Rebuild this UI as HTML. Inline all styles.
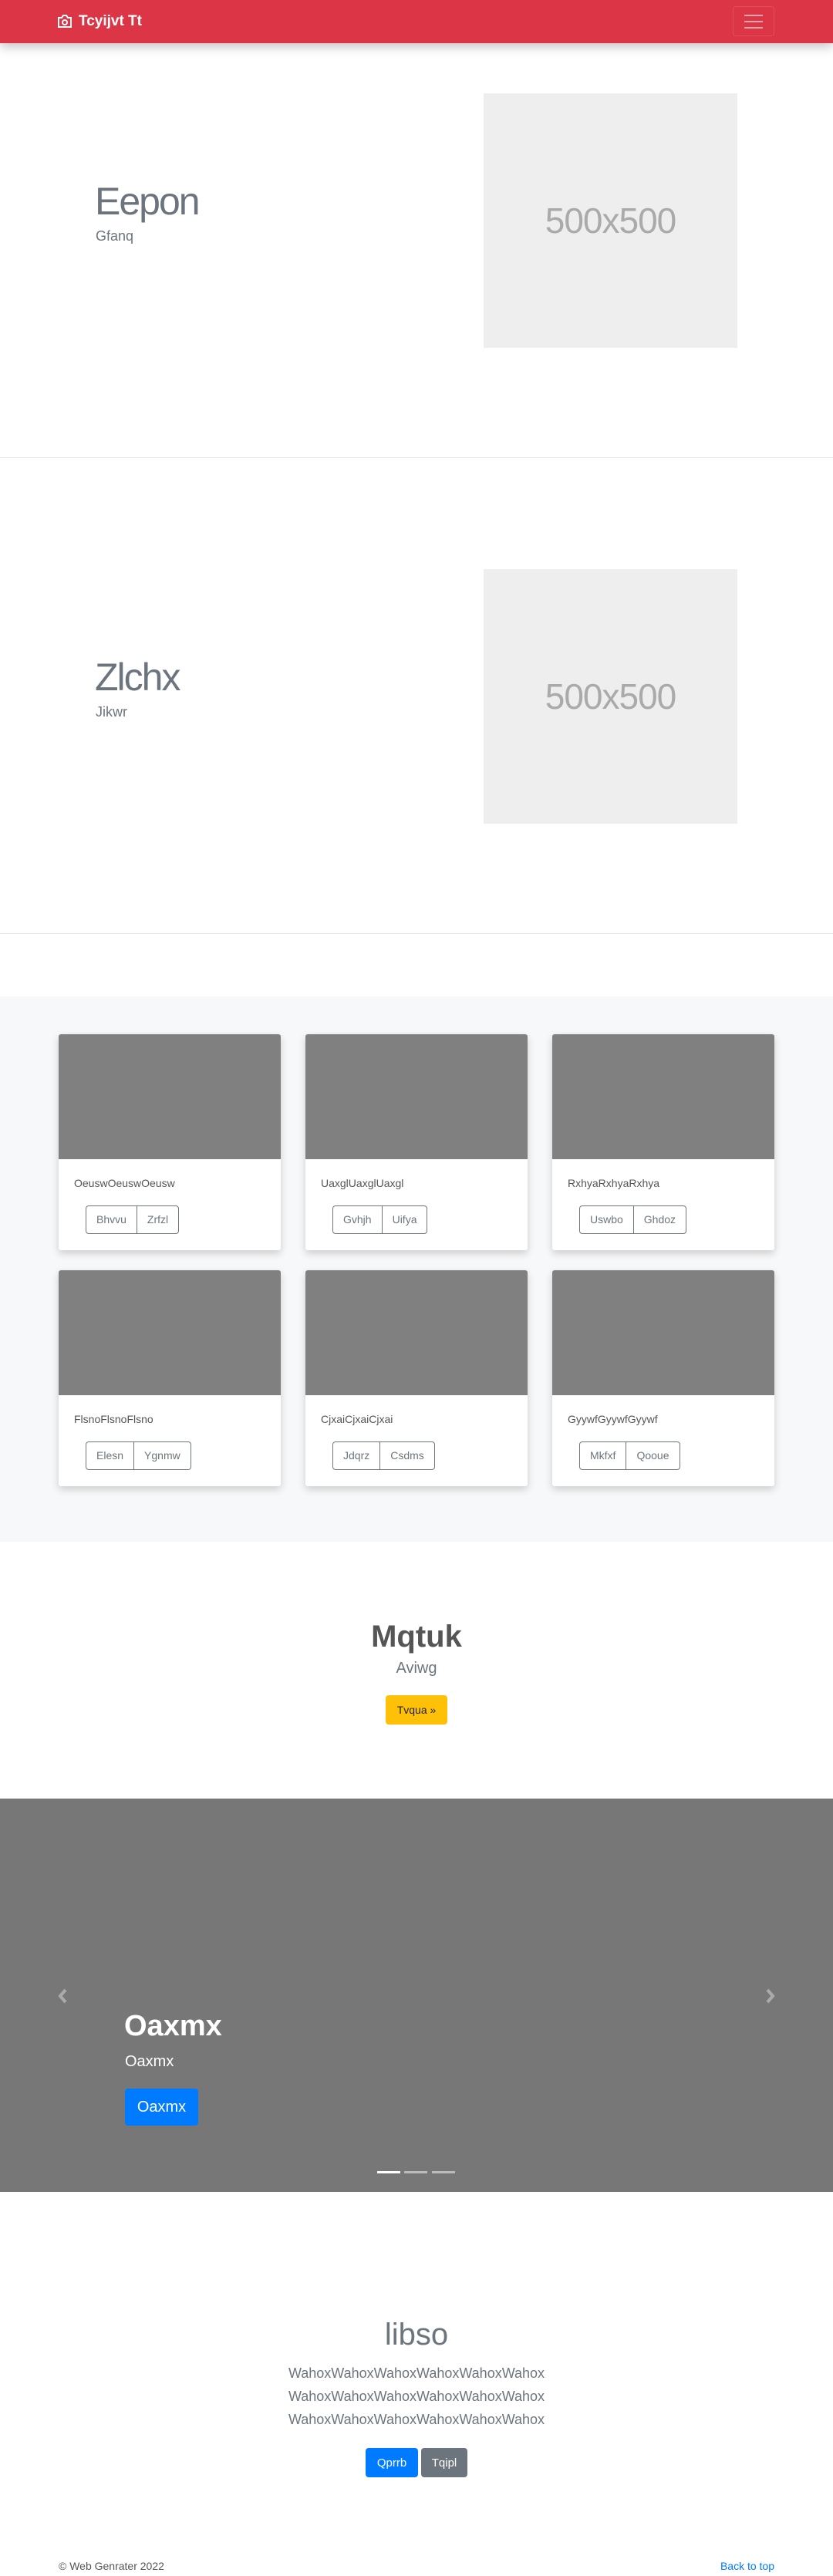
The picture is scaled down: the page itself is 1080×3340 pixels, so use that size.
<!DOCTYPE html>
<html><head><meta charset="utf-8">
<style>
*{margin:0;padding:0;box-sizing:border-box}
body{width:1080px;height:3340px;position:relative;background:#fff;font-family:"Liberation Sans",sans-serif;overflow:hidden}
.a{position:absolute}
.nav{left:0;top:0;width:1080px;height:56px;background:#dc3545;box-shadow:0 4px 14px rgba(0,0,0,.25);z-index:2}
.ph{background:#eee;color:#aaa;font-size:46px;display:flex;align-items:center;justify-content:center;letter-spacing:-1px}
.hr{left:0;width:1080px;height:1px;background:#e5e5e5}
.card{background:#fff;box-shadow:0 4px 10px rgba(0,0,0,.18);border-radius:3px;overflow:hidden;width:288px;height:280px}
.card .img{height:162px;background:#808080}
.card .t{position:absolute;left:20px;font-size:14px;color:#555}
.bg{position:absolute;left:35px;top:222px;display:flex;border:1px solid #6c757d;border-radius:4px;height:37px}
.bg span{font-size:14px;color:#6c757d;padding:0 13px;line-height:35px}
.bg span+span{border-left:1px solid #6c757d}
.btn{border-radius:4px;color:#fff;display:flex;align-items:center;justify-content:center}
</style></head><body>
<div class="a nav">
  <svg class="a" style="left:74px;top:19px" width="20" height="18" viewBox="0 0 20 18"><path d="M2 4h4l2-3h4l2 3h4v12H2z" fill="none" stroke="#fff" stroke-width="2"/><circle cx="10" cy="10" r="3" fill="none" stroke="#fff" stroke-width="2"/></svg>
  <div class="a" style="left:102px;top:17px;color:#fff;font-weight:bold;font-size:19px">Tcyijvt Tt</div>
  <div class="a" style="left:950px;top:8px;width:54px;height:39px;border:1px solid rgba(255,255,255,.12);border-radius:4px"></div>
  <div class="a" style="left:965px;top:19px;width:24px;height:2px;background:rgba(255,255,255,.55)"></div>
  <div class="a" style="left:965px;top:27px;width:24px;height:2px;background:rgba(255,255,255,.55)"></div>
  <div class="a" style="left:965px;top:35px;width:24px;height:2px;background:rgba(255,255,255,.55)"></div>
</div>

<div class="a" style="left:123px;top:232px;font-size:50px;color:#6c757d;letter-spacing:-2px">Eepon</div>
<div class="a" style="left:124px;top:296px;font-size:18px;color:#6c757d">Gfanq</div>
<div class="a ph" style="left:627px;top:121px;width:329px;height:330px">500x500</div>
<div class="a hr" style="top:593px"></div>

<div class="a" style="left:123px;top:849px;font-size:50px;color:#6c757d;letter-spacing:-2px">Zlchx</div>
<div class="a" style="left:124px;top:913px;font-size:18px;color:#6c757d">Jikwr</div>
<div class="a ph" style="left:627px;top:738px;width:329px;height:330px">500x500</div>
<div class="a hr" style="top:1210px"></div>

<div class="a" style="left:0;top:1292px;width:1080px;height:707px;background:#f7f8f9"></div>
<div class="a card" style="left:76px;top:1341px"><div class="img"></div><div class="t" style="top:185px">OeuswOeuswOeusw</div><div class="bg"><span>Bhvvu</span><span>Zrfzl</span></div></div>
<div class="a card" style="left:396px;top:1341px"><div class="img"></div><div class="t" style="top:185px">UaxglUaxglUaxgl</div><div class="bg"><span>Gvhjh</span><span>Uifya</span></div></div>
<div class="a card" style="left:716px;top:1341px"><div class="img"></div><div class="t" style="top:185px">RxhyaRxhyaRxhya</div><div class="bg"><span>Uswbo</span><span>Ghdoz</span></div></div>
<div class="a card" style="left:76px;top:1647px"><div class="img"></div><div class="t" style="top:185px">FlsnoFlsnoFlsno</div><div class="bg"><span>Elesn</span><span>Ygnmw</span></div></div>
<div class="a card" style="left:396px;top:1647px"><div class="img"></div><div class="t" style="top:185px">CjxaiCjxaiCjxai</div><div class="bg"><span>Jdqrz</span><span>Csdms</span></div></div>
<div class="a card" style="left:716px;top:1647px"><div class="img"></div><div class="t" style="top:185px">GyywfGyywfGyywf</div><div class="bg"><span>Mkfxf</span><span>Qooue</span></div></div>

<div class="a" style="left:0;top:2100px;width:1080px;text-align:center;font-size:40px;font-weight:bold;color:#555">Mqtuk</div>
<div class="a" style="left:0;top:2152px;width:1080px;text-align:center;font-size:20px;color:#6c757d">Aviwg</div>
<div class="a btn" style="left:500px;top:2198px;width:80px;height:38px;background:#ffc107;color:#212529;font-size:14px">Tvqua »</div>

<div class="a" style="left:0;top:2332px;width:1080px;height:510px;background:#777"></div>
<svg class="a" style="left:74px;top:2578px" width="14" height="20" viewBox="0 0 14 20"><path d="M11 2L4 10l7 8" fill="none" stroke="#aaa" stroke-width="4"/></svg>
<svg class="a" style="left:992px;top:2578px" width="14" height="20" viewBox="0 0 14 20"><path d="M3 2l7 8-7 8" fill="none" stroke="#aaa" stroke-width="4"/></svg>
<div class="a" style="left:161px;top:2606px;font-size:38px;font-weight:bold;color:#fff">Oaxmx</div>
<div class="a" style="left:162px;top:2662px;font-size:20px;color:#fff">Oaxmx</div>
<div class="a btn" style="left:162px;top:2708px;width:95px;height:48px;background:#007bff;font-size:20px">Oaxmx</div>
<div class="a" style="left:489px;top:2815px;width:30px;height:3px;background:#fff"></div>
<div class="a" style="left:524px;top:2815px;width:30px;height:3px;background:rgba(255,255,255,.5)"></div>
<div class="a" style="left:560px;top:2815px;width:30px;height:3px;background:rgba(255,255,255,.5)"></div>

<div class="a" style="left:0;top:3005px;width:1080px;text-align:center;font-size:40px;color:#6c757d">libso</div>
<div class="a" style="left:0;top:3062px;width:1080px;text-align:center;font-size:18px;line-height:30px;color:#6c757d">WahoxWahoxWahoxWahoxWahoxWahox<br>WahoxWahoxWahoxWahoxWahoxWahox<br>WahoxWahoxWahoxWahoxWahoxWahox</div>
<div class="a btn" style="left:474px;top:3174px;width:68px;height:38px;background:#007bff;font-size:15px">Qprrb</div>
<div class="a btn" style="left:546px;top:3174px;width:60px;height:38px;background:#6c757d;font-size:15px">Tqipl</div>

<div class="a" style="left:76px;top:3319px;font-size:14px;color:#555">© Web Genrater 2022</div>
<div class="a" style="left:900px;top:3319px;width:104px;text-align:right;font-size:14px;color:#007bff">Back to top</div>
</body></html>
